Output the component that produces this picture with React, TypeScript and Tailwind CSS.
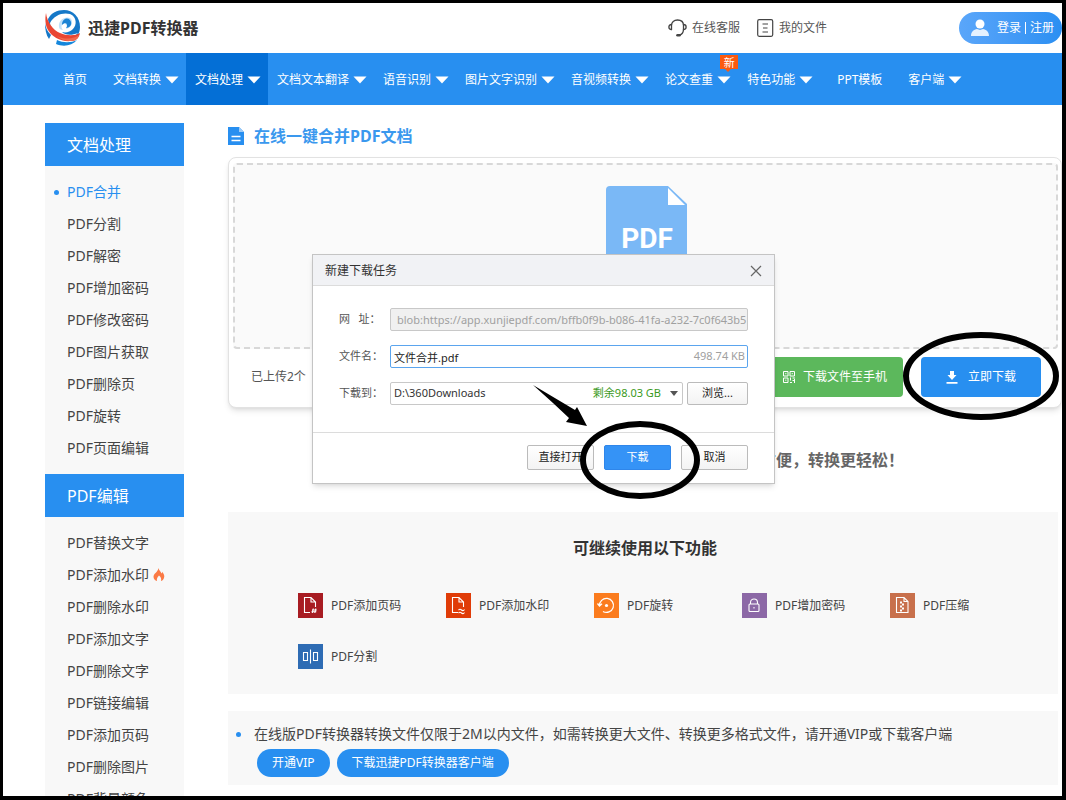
import React from "react";

type NavItem = { label: string; menu?: boolean; active?: boolean; badge?: string };

const navItems: NavItem[] = [
  { label: "首页" },
  { label: "文档转换", menu: true },
  { label: "文档处理", menu: true, active: true },
  { label: "文档文本翻译", menu: true },
  { label: "语音识别", menu: true },
  { label: "图片文字识别", menu: true },
  { label: "音视频转换", menu: true },
  { label: "论文查重", menu: true, badge: "新" },
  { label: "特色功能", menu: true },
  { label: "PPT模板" },
  { label: "客户端", menu: true },
];

type SideLink = { label: string; active?: boolean; hot?: boolean };

const sideGroups: { title: string; links: SideLink[] }[] = [
  {
    title: "文档处理",
    links: [
      { label: "PDF合并", active: true },
      { label: "PDF分割" },
      { label: "PDF解密" },
      { label: "PDF增加密码" },
      { label: "PDF修改密码" },
      { label: "PDF图片获取" },
      { label: "PDF删除页" },
      { label: "PDF旋转" },
      { label: "PDF页面编辑" },
    ],
  },
  {
    title: "PDF编辑",
    links: [
      { label: "PDF替换文字" },
      { label: "PDF添加水印", hot: true },
      { label: "PDF删除水印" },
      { label: "PDF添加文字" },
      { label: "PDF删除文字" },
      { label: "PDF链接编辑" },
      { label: "PDF添加页码" },
      { label: "PDF删除图片" },
      { label: "PDF背景颜色" },
    ],
  },
];

function Logo() {
  return (
    <svg width="36" height="36" viewBox="0 0 36 36" aria-hidden="true">
      <path d="M3 9 C6 3 12 0 19 0 C28 0 35 7 35 17 C35 20 34 23 33 25 L18 25 C9 22 3 15 3 9Z" fill="#1578c8" />
      <path d="M5 13 C9 5 18 2 25 4 C32 7 32 15 28 19 C25 22 21 23 17 22 C20 25 26 26 33 23 C28 29 16 27 10 22 C7 19 5 16 5 13Z" fill="#fff" />
      <path d="M14 17 C13 10 20 6 25 8 C29 11 27 18 21 19 C23 16 21 13 18 14 C16 15 16 18 18 20 C16 20 14 19 14 17Z" fill="#bfe1fa" />
      <path d="M17 15 C17 9 22 7 25 10 C28 14 25 18 21 18 C23 16 22 13 20 13 C19 13 18 14 17 15Z" fill="#1a83d4" />
      <path d="M1 3 C2 12 8 20 15 23 C22 26 30 26 35 23 C34 28 31 31 26 31 C16 32 7 27 3 20 C0 15 0 8 1 3Z" fill="#ea4632" />
      <path d="M12 26 C20 30 29 29 34 25 C33 29 30 31 26 31 C20 31 15 29 12 26Z" fill="#f4694c" />
      <path d="M0 13 C1 19 3 22 6 25 L4 29 C1 25 0 19 0 13Z" fill="#1578c8" />
      <path d="M12 30 C18 33 26 33 32 30 C27 36 18 37 11 34Z" fill="#1587dc" />
    </svg>
  );
}

function HeadsetIcon() {
  return (
    <svg width="19" height="18" viewBox="0 0 19 18" fill="none" stroke="#444" strokeWidth="1.3" strokeLinecap="round" aria-hidden="true">
      <path d="M3.500 10.500V6.500C3.500 3 6 1 9.500 1S15.500 3 15.500 6.500V10.500" />
      <path d="M3.500 5.500C0 5.500 0 10.500 3.500 10.500M15.500 5.500C19 5.500 19 10.500 15.500 10.500" />
      <path d="M15.500 10.500C15.300 13.500 14 15.500 11.500 16" />
      <path d="M9.500 16.200H11.500" strokeWidth="2.600" />
    </svg>
  );
}

function ListIcon() {
  return (
    <svg width="17" height="18" viewBox="0 0 17 18" fill="none" stroke="#444" strokeWidth="1.2" aria-hidden="true">
      <rect x="0.700" y="0.700" width="15" height="16.600" rx="1.500" />
      <path d="M5.500 5H11M6 9H10.500M5.500 13H11" />
    </svg>
  );
}

function UserIcon() {
  return (
    <svg width="18" height="18" viewBox="0 0 18 18" fill="#fff" aria-hidden="true">
      <circle cx="9" cy="5" r="4.500" />
      <path d="M0 17C0 12.500 3 10.500 6 10L9 11L12 10C15 10.500 18 12.500 18 17Z" opacity="0.850" />
    </svg>
  );
}

function FlameIcon() {
  return (
    <svg width="12" height="14" viewBox="0 0 12 14" aria-hidden="true">
      <path d="M5.500 0C6 2.500 8 3.500 8.500 5.500C9 5 9.200 4.500 9.200 3.800C11 6 12 8 10.800 10.500C10.200 12 9 12.800 8 13C8.600 11 8 9 6 7.500C4.500 9 3.400 11 4 13C2 12.500 0.500 11 0.500 8.800C0.500 5.500 5 4 5.500 0Z" fill="#fb7a45" />
    </svg>
  );
}

function QrIcon() {
  return (
    <svg width="12" height="12" viewBox="0 0 12 12" fill="none" stroke="#fff" aria-hidden="true">
      <path d="M0.500 0.500h4.500v4.500h-4.500zM7 0.500h4.500v4.500h-4.500zM0.500 7h4.500v4.500h-4.500z" />
      <path d="M2.200 2.700h1.200M8.700 2.700h1.200M2.200 9.200h1.200M7.500 6.500v3M7 11.500h2M9.500 7h2.500M9.500 9.500h2M11.500 8v4" />
    </svg>
  );
}

function DownloadIcon() {
  return (
    <svg width="12" height="13" viewBox="0 0 12 13" fill="#fff" aria-hidden="true">
      <path d="M4 0H8V4H10.500L6 9L1.500 4H4ZM0.500 11H11.500V12.700H0.500Z" />
    </svg>
  );
}

function DocTitleIcon() {
  return (
    <svg width="16" height="18" viewBox="0 0 16 18" aria-hidden="true">
      <path d="M0 0H11L16 5V18H0Z" fill="#288ff0" />
      <path d="M11 0L16 5H11Z" fill="#9dcbf8" />
      <path d="M3.500 9.500H12.500M3.500 13.500H12.500" stroke="#fff" strokeWidth="1.400" />
    </svg>
  );
}

function PdfFileIcon() {
  return (
    <svg width="82" height="104" viewBox="0 0 82 104" aria-hidden="true">
      <path d="M4 0H62L81 18V100Q81 104 77 104H4Q0 104 0 100V4Q0 0 4 0Z" fill="#7ab8f6" />
      <path d="M62 2L79 19H62Z" fill="#fff" />
      <text x="41" y="62" textAnchor="middle" fontFamily="Roboto, sans-serif" fontWeight="700" fontSize="28" fill="#fff">
        PDF
      </text>
    </svg>
  );
}

const pagePath = "M12 19.500H6.500V4.500H13L17.500 9V14M13 4.500V9H17.500";

const tools: { label: string; color: string; icon: React.ReactNode }[] = [
  {
    label: "PDF添加页码",
    color: "bg-[#a81c22]",
    icon: (
      <>
        <path d={pagePath} />
        <path d="M15.300 15.500L14.300 20M17.800 15.500L16.800 20M14 17H18.800M13.500 18.700H18.300" />
      </>
    ),
  },
  {
    label: "PDF添加水印",
    color: "bg-[#e03c08]",
    icon: (
      <>
        <path d={pagePath} />
        <path d="M12.500 17q1.500-1.500 3 0t3-0.500M12.500 20q1.500-1.500 3 0t3-0.500" />
      </>
    ),
  },
  {
    label: "PDF旋转",
    color: "bg-[#fb7c1e]",
    icon: (
      <>
        <path d="M5.500 13A7 7 0 1 1 9 18.500M3.500 10.500L5.500 13L8 10.800" strokeWidth="1.300" />
        <circle cx="12.500" cy="12.500" r="1.600" fill="#fff" stroke="none" />
      </>
    ),
  },
  {
    label: "PDF增加密码",
    color: "bg-[#8c68a6]",
    icon: (
      <>
        <rect x="7" y="11" width="10" height="7.500" rx="1" />
        <path d="M8.500 11V9.500C8.500 4.800 15.500 4.800 15.500 9.500V11M12 14V15.500" />
      </>
    ),
  },
  {
    label: "PDF压缩",
    color: "bg-[#c8704c]",
    icon: (
      <>
        <path d="M6.500 4.500H14L18 8.500V19.500H6.500ZM14 4.500V8.500H18" />
        <path d="M10 9.500h2M12 11.500h2M10 13.500h2M12 15.500h2M10 17.500h2" strokeWidth="1.800" />
      </>
    ),
  },
  {
    label: "PDF分割",
    color: "bg-[#2e6cb4]",
    icon: <path d="M5.500 8.500H9.500V16.500H5.500ZM15.500 8.500H19.500V16.500H15.500ZM12.500 5.500V19.500" />,
  },
];

function Header() {
  return (
    <header className="flex h-[50px] shrink-0 items-center justify-between pl-[42px]">
      <a href="#" className="flex items-center gap-[7px] text-base font-bold text-[#333]">
        <Logo />
        迅捷PDF转换器
      </a>
      <div className="flex items-center text-xs text-[#555]">
        <a href="#" className="mr-[17px] flex items-center gap-[5px]">
          <HeadsetIcon />
          在线客服
        </a>
        <a href="#" className="mr-[132px] flex items-center gap-[5px]">
          <ListIcon />
          我的文件
        </a>
        <div className="flex h-8 items-center rounded-full bg-gradient-to-r from-[#5aa6fa] to-[#2a8ff2] pr-2 pl-3 text-white">
          <UserIcon />
          <a href="#" className="ml-2 border-r border-white pr-1 leading-3">登录</a>
          <a href="#" className="pl-1 leading-3">注册</a>
        </div>
      </div>
    </header>
  );
}

function Nav() {
  return (
    <nav className="flex h-[52px] shrink-0 bg-[#288ff0] pl-[43px] text-xs text-white">
      {navItems.map((item) => (
        <a
          key={item.label}
          href="#"
          className={`relative flex items-center pt-px whitespace-nowrap ${item.menu ? "gap-1 pr-[7px] pl-[9px]" : "px-[17px]"} ${item.active ? "bg-[#046fd6]" : ""}`}
        >
          {item.label}
          {item.menu && (
            <svg width="14" height="8" viewBox="0 0 14 8" aria-hidden="true">
              <path d="M0.500 0.500H13.500L7 7.500Z" fill="#fff" />
            </svg>
          )}
          {item.badge && (
            <span className="absolute top-[2px] right-0 flex h-[14px] w-[18px] items-center justify-center bg-[#fb5a10] text-[11px] leading-none">
              {item.badge}
              <svg className="absolute top-[14px] left-[5px]" width="6" height="3" viewBox="0 0 6 3" aria-hidden="true">
                <path d="M0 0H6L3 3Z" fill="#fb5a10" />
              </svg>
            </span>
          )}
        </a>
      ))}
    </nav>
  );
}

function Sidebar() {
  return (
    <aside className="w-[139px] shrink-0 bg-[#f8f8f8] text-sm text-[#444]">
      {sideGroups.map((group) => (
        <section key={group.title}>
          <h2 className="flex h-[43px] items-center bg-[#288ff0] pl-[22px] text-base text-white">{group.title}</h2>
          <ul className="py-[10px]">
            {group.links.map((link) => (
              <li key={link.label}>
                <a href="#" className={`flex h-8 items-center ${link.active ? "text-[#288ff0]" : ""}`}>
                  <span className="flex w-[22px] justify-center">
                    {link.active && <span className="size-[5px] rounded-full bg-[#288ff0]" />}
                  </span>
                  {link.label}
                  {link.hot && (
                    <span className="ml-1">
                      <FlameIcon />
                    </span>
                  )}
                </a>
              </li>
            ))}
          </ul>
        </section>
      ))}
    </aside>
  );
}

function Main() {
  return (
    <main className="min-w-0 flex-1">
      <h1 className="flex h-[26px] items-center gap-[10px] text-base font-bold text-[#3a98ee]">
        <DocTitleIcon />
        在线一键合并PDF文档
      </h1>

      <section className="mt-2 rounded-lg border border-[#e2e2e2] bg-white pt-[5px] pr-[3px] pb-[10px] pl-1 shadow-md">
        <div className="flex h-[186px] justify-center rounded border-2 border-dashed border-[#d8d8d8] bg-[#fafafa] pt-[21px] pl-[2px]">
          <PdfFileIcon />
        </div>
        <div className="mt-2 flex h-10 items-center pr-[17px] pl-[18px] text-xs text-white">
          <span className="mr-auto text-[#555]">已上传2个</span>
          <button type="button" className="mr-[18px] flex h-10 items-center gap-2 rounded bg-[#5cb85c] px-4">
            <QrIcon />
            下载文件至手机
          </button>
          <button type="button" className="flex h-10 w-[120px] items-center justify-center gap-[10px] rounded bg-[#288ff0]">
            <DownloadIcon />
            立即下载
          </button>
        </div>
      </section>

      <p className="mt-10 pr-[158px] text-right text-base font-bold text-[#666]">方便，转换更轻松！</p>

      <section className="mt-10 mr-1 h-[182px] bg-[#f8f8f8] pt-6">
        <h2 className="pl-1 text-center text-base font-bold text-[#333]">可继续使用以下功能</h2>
        <ul className="mt-[33px] flex flex-wrap gap-y-[26px] pl-[70px]">
          {tools.map((tool) => (
            <li key={tool.label} className="w-[148px]">
              <a href="#" className="flex items-center gap-2 text-xs text-[#444]">
                <span className={`size-[25px] ${tool.color}`}>
                  <svg width="25" height="25" viewBox="0 0 25 25" fill="none" stroke="#fff" strokeWidth="1.100" aria-hidden="true">
                    {tool.icon}
                  </svg>
                </span>
                {tool.label}
              </a>
            </li>
          ))}
        </ul>
      </section>

      <section className="mt-[17px] mr-1 bg-[#f8f8f8] pt-3 pb-2 text-sm text-[#444]">
        <p className="flex items-center pl-2 leading-[22px]">
          <span className="mr-[13px] size-[5px] rounded-full bg-[#288ff0]" />
          在线版PDF转换器转换文件仅限于2M以内文件，如需转换更大文件、转换更多格式文件，请开通VIP或下载客户端
        </p>
        <div className="mt-1 flex gap-[7px] pl-[29px] text-xs text-white">
          <a href="#" className="flex h-7 items-center rounded-full bg-[#288ff0] px-[15px]">开通VIP</a>
          <a href="#" className="flex h-7 items-center rounded-full bg-[#288ff0] px-[15px]">下载迅捷PDF转换器客户端</a>
        </div>
      </section>
    </main>
  );
}

const plainButton = "rounded-xs border border-[#bbb] bg-gradient-to-b from-white to-[#f3f3f3] text-[#222]";

function DownloadDialog() {
  return (
    <div
      role="dialog"
      aria-labelledby="dialog-title"
      className="absolute top-[251px] left-[309px] w-[463px] border border-[#c4c4c4] bg-white text-[11px] text-[#555] shadow-md"
    >
      <div className="flex h-[31px] items-center justify-between border-b border-[#dcdcdc] bg-[#f1f2f5] pt-px pr-3 pl-3">
        <h2 id="dialog-title" className="text-xs text-[#333]">新建下载任务</h2>
        <button type="button" aria-label="关闭">
          <svg width="12" height="12" viewBox="0 0 12 12" stroke="#666" strokeWidth="1.200" aria-hidden="true">
            <path d="M1 1L11 11M11 1L1 11" />
          </svg>
        </button>
      </div>

      <div className="flex flex-col gap-[14px] pt-[22px] pr-[26px] pb-[27px] pl-[26px]">
        <div className="flex items-center">
          <label htmlFor="url" className="w-[51px] shrink-0 whitespace-pre">网   址：</label>
          <input id="url" readOnly value="blob:https://app.xunjiepdf.com/bffb0f9b-b086-41fa-a232-7c0f643b5" className="h-[23px] min-w-0 flex-1 rounded-xs border border-[#c8c8c8] bg-[#f0f0f0] pl-[6px] text-[#a0a0a0] outline-none" />
        </div>
        <div className="flex items-center">
          <label htmlFor="filename" className="w-[51px] shrink-0">文件名：</label>
          <div className="relative flex-1">
            <input id="filename" defaultValue="文件合并.pdf" className="h-[23px] w-full rounded-xs border border-[#5ba5ee] pl-[3px] text-[#222] outline-none" />
            <span className="absolute inset-y-0 right-[3px] flex items-center text-[#a0a0a0]">498.74 KB</span>
          </div>
        </div>
        <div className="flex items-center">
          <label htmlFor="folder" className="w-[51px] shrink-0">下载到：</label>
          <div className="relative flex-1">
            <select id="folder" className="h-[23px] w-full appearance-none rounded-xs border border-[#c8c8c8] bg-white pl-[3px] text-[#333] outline-none">
              <option>D:\360Downloads</option>
            </select>
            <span className="pointer-events-none absolute inset-y-0 right-[5px] flex items-center gap-[9px] text-[#3a9a1c]">
              剩余98.03 GB
              <svg width="8" height="5" viewBox="0 0 8 5" aria-hidden="true">
                <path d="M0 0H8L4 5Z" fill="#555" />
              </svg>
            </span>
          </div>
          <button type="button" className={`ml-1 h-[23px] w-[61px] ${plainButton}`}>浏览...</button>
        </div>
      </div>

      <div className="flex justify-end gap-[10px] border-t border-[#dcdcdc] pt-3 pr-[26px] pb-[13px]">
        <button type="button" className={`h-[25px] w-[67px] ${plainButton}`}>直接打开</button>
        <button type="button" className="h-[25px] w-[67px] rounded-xs border border-[#2f86ea] bg-[#3593f6] text-white">下载</button>
        <button type="button" className={`h-[25px] w-[67px] ${plainButton}`}>取消</button>
      </div>
    </div>
  );
}

function Annotations() {
  return (
    <>
      <svg className="pointer-events-none absolute top-[382px] left-[528px]" width="172" height="118" viewBox="0 0 172 118" aria-hidden="true">
        <ellipse cx="109" cy="75" rx="57" ry="36" fill="none" stroke="#000" strokeWidth="6" />
        <path d="M2 0L44 25L46 22L56 41L35 37L38 33L22 18Z" fill="#000" />
      </svg>
      <svg className="pointer-events-none absolute top-[328px] left-[898px]" width="160" height="92" viewBox="0 0 160 92" aria-hidden="true">
        <ellipse cx="80" cy="45" rx="75" ry="41" fill="none" stroke="#000" strokeWidth="6" />
      </svg>
    </>
  );
}

export default function App() {
  return (
    <div className="relative flex h-screen flex-col overflow-hidden border-[3px] border-r-4 border-b-4 border-black bg-white font-['Noto_Sans','Noto_Sans_CJK_SC',sans-serif]">
      <Header />
      <Nav />
      <div className="flex min-h-0 flex-1 items-start gap-11 pt-[18px] pl-[42px]">
        <Sidebar />
        <Main />
      </div>
      <DownloadDialog />
      <Annotations />
    </div>
  );
}
